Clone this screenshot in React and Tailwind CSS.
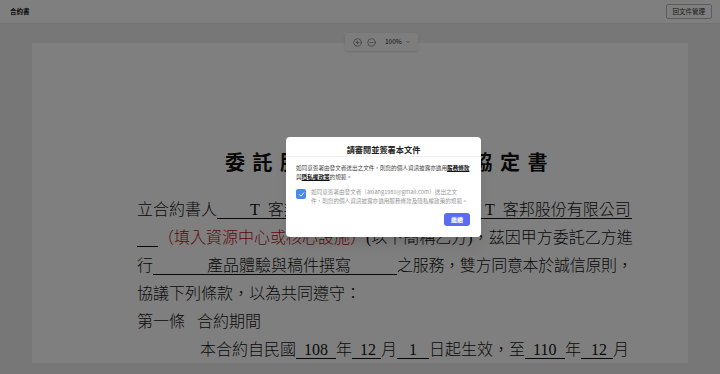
import React from 'react';
import { CirclePlus, CircleMinus, ChevronDown } from 'lucide-react';

const ui = { fontFamily: '"Noto Sans CJK TC", "Noto Sans", sans-serif' };
const doc = { fontFamily: '"Liberation Serif", "Noto Sans CJK TC", serif' };

// underlined blank / filled field inside the contract text
const Field = ({ w, pl = 0, children }) => (
  <span className={`inline-flex h-[18px] items-center border-b border-[#111] leading-[17px] ${w} ${pl}`}>
    {children}
  </span>
);

const Line = ({ className = '', children }) => (
  <div className={`flex h-[28px] items-center whitespace-nowrap ${className}`}>{children}</div>
);

const ContractPage = () => (
  <div className="h-[320px] w-[656px] bg-white pl-[105px] pt-[106px] text-[16px] font-light text-[#111]" style={doc}>
    <div className="ml-[88px] flex h-[28px] items-center text-[20px] font-bold tracking-[7.5px]">
      委託服務暨稿件撰寫協定書
    </div>
    <div className="mt-[19px]">
      <Line>
        <span>立合約書人</span>
        <Field w="w-[179px]" pl="pl-[33px]">T&nbsp;&nbsp;客邦股份有限公司</Field>
        <span>（甲方）與</span>
        <Field w="w-[156px]" pl="pl-[9px]">T&nbsp;&nbsp;客邦股份有限公司</Field>
      </Line>
      <Line>
        <Field w="w-[21px]" />
        <span className="text-[#b41212]">（填入資源中心或核心設施）</span>
        <span>(以下簡稱乙方)，茲因甲方委託乙方進</span>
      </Line>
      <Line>
        <span>行</span>
        <Field w="w-[244px]" pl="pl-[54px]">產品體驗與稿件撰寫</Field>
        <span className="tracking-[-0.3px]">之服務，雙方同意本於誠信原則，</span>
      </Line>
      <Line>
        <span>協議下列條款，以為共同遵守：</span>
      </Line>
      <Line>
        <span>第一條</span>
        <span className="ml-[12px]">合約期間</span>
      </Line>
      <Line className="pl-[63px]">
        <span>本合約自民國</span>
        <Field w="w-[40px]" pl="pl-[8px]">108</Field>
        <span>年</span>
        <Field w="w-[29px]" pl="pl-[8px]">12</Field>
        <span>月</span>
        <Field w="w-[32px]" pl="pl-[12px]">1</Field>
        <span>日起生效，至</span>
        <Field w="w-[40px]" pl="pl-[8px]">110</Field>
        <span>年</span>
        <Field w="w-[32px]" pl="pl-[10px]">12</Field>
        <span>月</span>
      </Line>
    </div>
  </div>
);

const SignModal = () => (
  <div className="w-[195px] rounded-[4px] bg-white px-[10px] pb-[11px] shadow-lg" style={ui}>
    <div className="-mx-[10px] h-[20px] border-b border-[#efefef] pt-[7px] text-center text-[8.2px] font-bold leading-[10px] text-[#222]">
      請審閱並簽署本文件
    </div>
    <div className="mt-[7px] text-[5.6px] leading-[9px] text-[#444]">
      <div className="whitespace-nowrap">
        如同意簽署由發文者送出之文件，則您的個人資訊披露亦適用
        <b className="font-bold text-[#111] underline">服務條款</b>
      </div>
      <div className="whitespace-nowrap">
        與<b className="font-bold text-[#111] underline">隱私權政策</b>的規範。
      </div>
    </div>
    <div className="mt-[6px] flex gap-[5px]">
      <span className="mt-[1px] flex h-[10px] w-[10px] shrink-0 items-center justify-center rounded-[2px] bg-[#4a88f2]">
        <svg width="7" height="7" viewBox="0 0 10 10" fill="none">
          <path d="M2 5.2 4.1 7.3 8.2 2.8" stroke="white" strokeWidth="1.4" strokeLinecap="round" strokeLinejoin="round" />
        </svg>
      </span>
      <div className="text-[5.6px] leading-[8.5px] text-[#999]">
        <div className="whitespace-nowrap">如同意簽署由發文者（axiang1980@gmail.com）送出之文</div>
        <div className="whitespace-nowrap">件，則您的個人資訊披露亦適用服務條款及隱私權政策的規範。</div>
      </div>
    </div>
    <div className="mt-[8px] flex justify-end pr-[1px]">
      <button className="h-[13px] w-[26px] rounded-[3px] bg-[#5b6cf0] text-[6px] font-bold leading-[13px] text-white">
        繼續
      </button>
    </div>
  </div>
);

export default function App() {
  return (
    <div className="relative h-[374px] w-full overflow-hidden bg-[#eeeef0]">
      <header className="flex h-[24px] items-center justify-between border-b border-[#e6e6e6] bg-white pl-[10px] pr-[8px]" style={ui}>
        <span className="text-[6.5px] font-bold text-[#111]">合約書</span>
        <button className="h-[15px] rounded-[2px] border border-[#bbb] px-[6px] text-[6.5px] leading-[13px] text-[#333]">
          回文件管理
        </button>
      </header>

      <main className="pl-[32px] pt-[19px]">
        <ContractPage />
      </main>

      {/* floating zoom toolbar */}
      <div
        className="absolute left-[345px] top-[33px] flex h-[18px] w-[73px] items-center gap-[5px] rounded-[2px] bg-[#fafafa] pl-[8px] text-[#555] shadow-sm"
        style={ui}
      >
        <CirclePlus size={9} strokeWidth={1.5} />
        <CircleMinus size={9} strokeWidth={1.5} />
        <span className="ml-[4px] text-[6.5px] text-[#222]">100%</span>
        <ChevronDown size={6} strokeWidth={2} className="-ml-[2px]" />
      </div>

      {/* dimmed backdrop + dialog */}
      <div className="absolute inset-0 bg-black/50 pl-[286px] pt-[137px]">
        <SignModal />
      </div>
    </div>
  );
}
